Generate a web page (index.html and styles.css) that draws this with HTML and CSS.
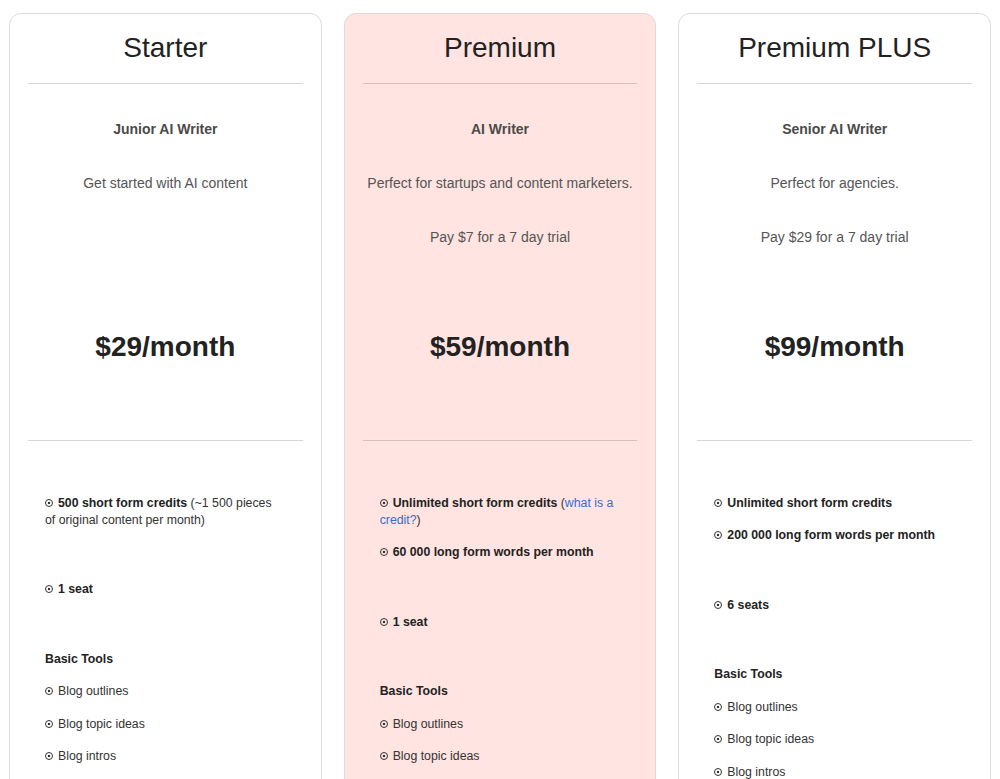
FILE: index.html
```html
<!DOCTYPE html>
<html lang="en">
<head>
<meta charset="utf-8">
<title>Pricing</title>
<link rel="stylesheet" href="styles.css">
</head>
<body>
<main class="plans">
  <section class="card">
    <h2 class="title">Starter</h2>
    <hr class="rule">
    <div class="info">
      <p class="role">Junior AI Writer</p>
      <p class="desc">Get started with AI content</p>
    </div>
    <p class="price">$29/month</p>
    <hr class="rule rule-low">
    <div class="features">
      <div class="group">
        <p class="feat"><span class="dot"></span><b>500 short form credits</b> (~1 500 pieces of original content per month)</p>
      </div>
      <div class="group">
        <p class="feat"><span class="dot"></span><b>1 seat</b></p>
      </div>
      <div class="group">
        <p class="feat"><b>Basic Tools</b></p>
        <p class="feat"><span class="dot"></span>Blog outlines</p>
        <p class="feat"><span class="dot"></span>Blog topic ideas</p>
        <p class="feat"><span class="dot"></span>Blog intros</p>
        <p class="feat"><span class="dot"></span>Blog conclusions</p>
      </div>
    </div>
  </section>

  <section class="card card-featured">
    <h2 class="title">Premium</h2>
    <hr class="rule">
    <div class="info">
      <p class="role">AI Writer</p>
      <p class="desc">Perfect for startups and content marketers.</p>
      <p class="desc">Pay $7 for a 7 day trial</p>
    </div>
    <p class="price">$59/month</p>
    <hr class="rule rule-low">
    <div class="features">
      <div class="group">
        <p class="feat"><span class="dot"></span><b>Unlimited short form credits</b> (<a class="link" href="#">what is a credit?</a>)</p>
        <p class="feat"><span class="dot"></span><b>60 000 long form words per month</b></p>
      </div>
      <div class="group">
        <p class="feat"><span class="dot"></span><b>1 seat</b></p>
      </div>
      <div class="group">
        <p class="feat"><b>Basic Tools</b></p>
        <p class="feat"><span class="dot"></span>Blog outlines</p>
        <p class="feat"><span class="dot"></span>Blog topic ideas</p>
        <p class="feat"><span class="dot"></span>Blog intros</p>
        <p class="feat"><span class="dot"></span>Blog conclusions</p>
      </div>
    </div>
  </section>

  <section class="card">
    <h2 class="title">Premium PLUS</h2>
    <hr class="rule">
    <div class="info">
      <p class="role">Senior AI Writer</p>
      <p class="desc">Perfect for agencies.</p>
      <p class="desc">Pay $29 for a 7 day trial</p>
    </div>
    <p class="price">$99/month</p>
    <hr class="rule rule-low">
    <div class="features">
      <div class="group">
        <p class="feat"><span class="dot"></span><b>Unlimited short form credits</b></p>
        <p class="feat"><span class="dot"></span><b>200 000 long form words per month</b></p>
      </div>
      <div class="group">
        <p class="feat"><span class="dot"></span><b>6 seats</b></p>
      </div>
      <div class="group">
        <p class="feat"><b>Basic Tools</b></p>
        <p class="feat"><span class="dot"></span>Blog outlines</p>
        <p class="feat"><span class="dot"></span>Blog topic ideas</p>
        <p class="feat"><span class="dot"></span>Blog intros</p>
        <p class="feat"><span class="dot"></span>Blog conclusions</p>
      </div>
    </div>
  </section>
</main>
</body>
</html>
```

FILE: styles.css
```css
html, body {
  margin: 0;
  padding: 0;
  background: #ffffff;
}

body {
  font-family: "Liberation Sans", Arial, Helvetica, sans-serif;
  color: #222222;
  overflow: hidden;
}

.plans {
  display: grid;
  grid-template-columns: repeat(3, 1fr);
  gap: 22px;
  padding: 13px 9px 0 9px;
  align-items: start;
}

.card {
  border: 1px solid #dcdcdc;
  border-radius: 12px;
  padding: 17px 18px 40px 18px;
  background: #ffffff;
}

.card-featured {
  background: #ffe4e1;
  border-color: #e4d6d4;
}

.title {
  margin: 0;
  font-size: 28px;
  line-height: 34px;
  font-weight: 400;
  text-align: center;
  color: #222222;
}

.rule {
  margin: 18px 0 0 0;
  border: 0;
  border-top: 1px solid rgba(0, 0, 0, 0.16);
  height: 0;
}

.rule-low {
  margin-top: 76px;
}

.info {
  box-sizing: border-box;
  height: 246px;
  padding-top: 36.5px;
  text-align: center;
}

.role {
  margin: 0;
  font-size: 14px;
  line-height: 17px;
  font-weight: 700;
  color: #4a4a4a;
}

.desc {
  margin: 37px 0 0 0;
  font-size: 14px;
  line-height: 17px;
  color: #555555;
}

.price {
  margin: 0;
  font-size: 28px;
  line-height: 34px;
  font-weight: 700;
  text-align: center;
  color: #222222;
}

.features {
  padding: 53.5px 21px 0 17px;
  display: flex;
  flex-direction: column;
  gap: 37px;
}

.feat {
  margin: 0 0 15.5px 0;
  font-size: 12.3px;
  line-height: 17px;
  color: #333333;
}

.feat b {
  color: #222222;
}

.dot {
  display: inline-block;
  box-sizing: border-box;
  width: 8px;
  height: 8px;
  margin-right: 5px;
  border: 1px solid #333333;
  border-radius: 50%;
  background: radial-gradient(circle, #333333 0 1.3px, transparent 1.6px);
  vertical-align: 0px;
}

.link {
  color: #2f6fcf;
  text-decoration: none;
}
```
